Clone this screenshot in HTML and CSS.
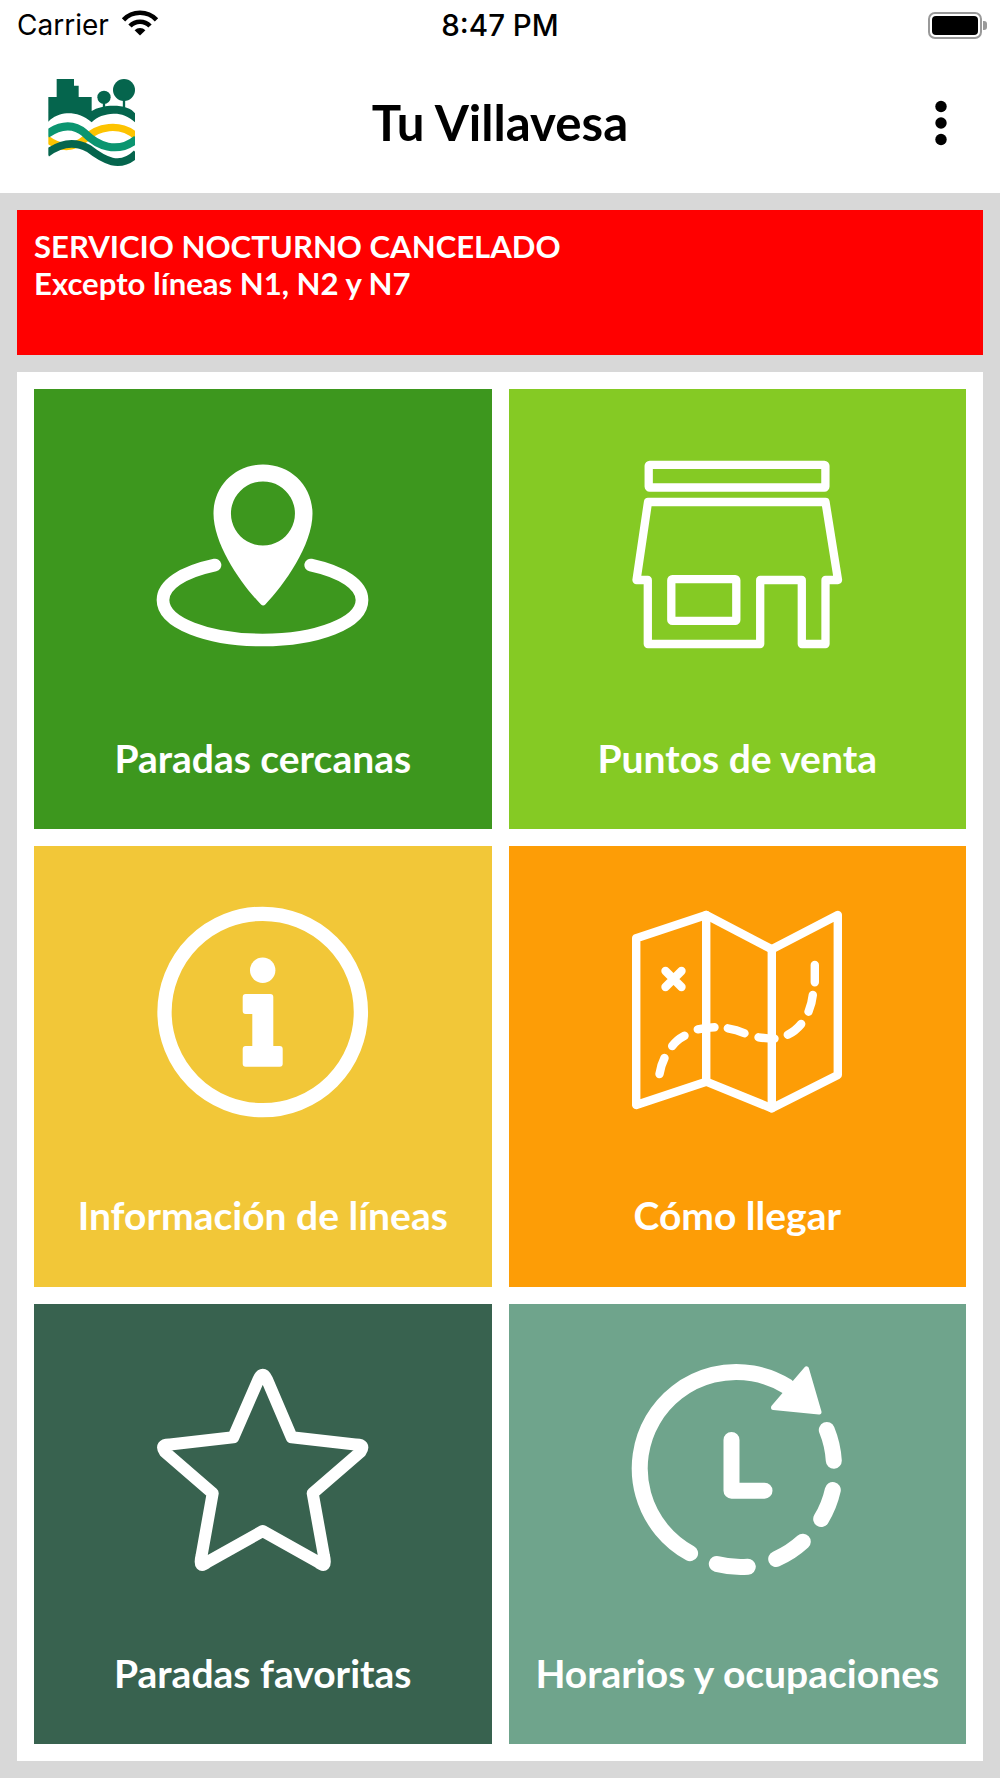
FILE: index.html
```html
<!DOCTYPE html>
<html lang="es">
<head>
<meta charset="utf-8">
<title>Tu Villavesa</title>
<link rel="stylesheet" href="styles.css">
</head>
<body>
<header class="top">
  <div class="status">
    <div class="status-left">
      <span class="carrier">Carrier</span>
      <svg class="wifi" viewBox="0 0 38 26"><path d="M2.5 9.9A22.7 22.7 0 0 1 35.5 9.9" fill="none" stroke="#000" stroke-width="4.6"/><path d="M9 16A13.8 13.8 0 0 1 29 16" fill="none" stroke="#000" stroke-width="4.6"/><path d="M19 25.5L13.6 20.3A7.5 7.5 0 0 1 24.4 20.3Z" fill="#000"/></svg>
    </div>
    <span class="time">8:47 PM</span>
    <div class="status-right">
      <span class="battery"><span class="battery-level"></span></span><span class="battery-nub"></span>
    </div>
  </div>
  <nav class="nav">
    <svg class="logo" viewBox="0 0 360 330">
      <defs><clipPath id="logoclip"><rect x="55" y="0" width="260" height="330"/></clipPath></defs>
      <path d="M55 170V96H80V42H132V62H146V96H185V138C200 128 225 122 250 122C280 122 305 130 315 145V172C295 152 270 145 250 146C225 147 200 155 185 172C160 150 135 144 110 145C90 146 70 155 55 170Z" fill="#05654d"/>
      <circle cx="222" cy="97" r="20" fill="#05654d"/><circle cx="282" cy="75" r="33" fill="#05654d"/>
      <path d="M222 110V128M282 100V128" stroke="#05654d" stroke-width="7"/>
      <g clip-path="url(#logoclip)" fill="none">
        <path d="M50 222C90 252 130 252 165 222C200 185 270 170 320 215" stroke="#fdc300" stroke-width="22"/>
        <path d="M50 208C90 180 130 175 165 205C200 240 260 270 320 222" stroke="#0b9570" stroke-width="24"/>
        <path d="M50 265C90 235 130 225 175 250C220 285 270 315 320 265" stroke="#05654d" stroke-width="23"/>
      </g>
    </svg>
    <h1 class="title">Tu Villavesa</h1>
    <svg class="more" viewBox="0 0 14 46"><circle cx="7" cy="6.5" r="5.7"/><circle cx="7" cy="23" r="5.7"/><circle cx="7" cy="39.5" r="5.7"/></svg>
  </nav>
</header>
<main class="content">
  <section class="alert">
    <p>SERVICIO NOCTURNO CANCELADO</p>
    <p>Excepto líneas N1, N2 y N7</p>
  </section>
  <section class="panel">
    <a class="tile tile-stops">
      <svg class="icon" viewBox="3 -7 260 240">
        <path fill-rule="evenodd" d="M133 24.5C105 24.5 83.5 46 83.5 73.5C83.5 105 112 145 131 164.5C132.300 165.800 134 165.800 135.300 164.500C154 145 182.500 105 182.500 73.500C182.500 46 161 24.500 133 24.500ZM133 41.500A32 32 0 1 1 132.900 41.500Z" fill="#fff"/>
        <path d="M85 125C52 132 33 145 33 160C33 183 78 200 132.500 200C187 200 232 183 232 160C232 145 213 132 180.700 125" fill="none" stroke="#fff" stroke-width="12.700" stroke-linecap="round"/>
      </svg>
      <span class="label">Paradas cercanas</span>
    </a>
    <a class="tile tile-sales">
      <svg class="icon line" viewBox="-2.500 -7 260 240" stroke-width="8.300">
        <rect x="39.200" y="24.800" width="176.700" height="22.700" rx="1"/>
        <path d="M27 140L38.500 62H216L228.500 140H216V204H192.300V140H150.700V204H38.300V140Z"/>
        <rect x="61.800" y="139.200" width="65" height="41.700" rx="1"/>
      </svg>
      <span class="label">Puntos de venta</span>
    </a>
    <a class="tile tile-info">
      <svg class="icon" viewBox="3 0 260 240">
        <circle cx="132.700" cy="122" r="98.200" fill="none" stroke="#fff" stroke-width="14.300"/>
        <circle cx="132.700" cy="80.300" r="12.700" fill="#fff"/>
        <path d="M115.700 107H140.300V159H149.700V173.700H115.700V159H125.300V121H115.700Z" fill="#fff" stroke="#fff" stroke-width="6" stroke-linejoin="round"/>
      </svg>
      <span class="label">Información de líneas</span>
    </a>
    <a class="tile tile-route">
      <svg class="icon line" viewBox="-2.500 0 260 240" stroke-width="8.400">
        <path d="M26.700 48.300L96.700 25L162.300 59.300L228.300 25V185L162.300 218.300L96.700 191.700L26.700 215Z"/>
        <path d="M96.700 25V191.700M162.300 59.300V218.300"/>
        <path d="M56 81L72 97M72 81L56 97"/>
        <path d="M50 184Q51.500 175 55 168M62.700 156Q67 150 75 145.700M88.300 139.300Q97 137.500 105 137.300M118.300 138.300Q127 139.500 135 143.300M149 147.300Q157 148.500 165 148.700M178.300 144.700Q186 141 191.700 134M199 121.700Q202.500 113 203.300 105M205.300 75V92.300"/>
      </svg>
      <span class="label">Cómo llegar</span>
    </a>
    <a class="tile tile-favs">
      <svg class="icon line" viewBox="3 -2 260 240" stroke-width="12">
        <path d="M128.500 29.500Q132.700 20 137 29.500L161.700 87.300L225.400 94.500Q236 94 230.400 102L182.700 143.300L194 206Q197.400 220 188 212L132.700 181L77.500 212Q68 220 71.500 206L82.700 143.300L35 102Q29.400 94 40 94.500L103.300 87.300Z"/>
      </svg>
      <span class="label">Paradas favoritas</span>
    </a>
    <a class="tile tile-times">
      <svg class="icon line" viewBox="-2.500 -2 260 240" stroke-width="16">
        <path d="M80.600 203.200A96.500 96.500 0 1 1 177.700 36.500"/>
        <path d="M197 19L209.500 62L164 57.500Z" fill="#fff" stroke-width="5"/>
        <path d="M217.300 80A96.500 96.500 0 0 1 224.300 110.700M223.300 140A96.500 96.500 0 0 1 211.700 169M193.300 191.700A96.500 96.500 0 0 1 166.700 209M138.300 216.700A96.500 96.500 0 0 1 107.300 214"/>
        <path d="M122 90V140.700H155"/>
      </svg>
      <span class="label">Horarios y ocupaciones</span>
    </a>
  </section>
</main>
</body>
</html>
```
FILE: styles.css
```css
* { box-sizing: border-box; }
html, body { margin: 0; padding: 0; }
body {
  width: 1000px;
  height: 1778px;
  background: #d8d8d8;
  font-family: "Lato", sans-serif;
  display: flex;
  flex-direction: column;
}
.top { background: #fff; height: 193px; flex: none; }
.status {
  height: 50px;
  padding: 0 13px 0 17px;
  display: grid;
  grid-template-columns: 1fr auto 1fr;
  align-items: center;
  font-family: "Inter", sans-serif;
  color: #000;
}
.status-left { display: flex; align-items: center; gap: 12px; }
.carrier { font-weight: 400; font-size: 28px; }
.wifi { width: 38px; height: 26px; margin-top: -4px; }
.time { font-weight: 500; font-size: 29.500px; margin-left: -4px; }
.status-right { display: flex; align-items: center; justify-content: flex-end; }
.battery {
  width: 54px;
  height: 27px;
  border: 2px solid #999;
  border-radius: 7px;
  padding: 2px;
  display: block;
}
.battery-level { display: block; width: 100%; height: 100%; background: #000; border-radius: 4px; }
.battery-nub { width: 4px; height: 9px; background: #999; margin-left: 1px; border-radius: 0 3px 3px 0; }
.nav {
  height: 143px;
  padding: 0 30px;
  display: grid;
  grid-template-columns: 1fr auto 1fr;
  align-items: center;
}
.logo { width: 120px; height: 110px; align-self: start; margin-top: 15px; }
.title {
  margin: 0;
  font-size: 49.200px;
  font-weight: 700;
  color: #000;
}
.more { width: 14px; height: 46px; fill: #000; justify-self: end; margin-right: 22px; margin-top: 3px; }
.content {
  flex: 1;
  padding: 17px;
  display: flex;
  flex-direction: column;
  gap: 17px;
}
.alert {
  height: 145px;
  flex: none;
  background: #f00;
  color: #fff;
  padding: 18px 17px;
  font-weight: 700;
  font-size: 31.100px;
  line-height: 37px;
}
.alert p { margin: 0; }
.panel {
  flex: 1;
  background: #fff;
  padding: 17px;
  display: grid;
  grid-template-columns: 1fr 1fr;
  grid-template-rows: repeat(3, 1fr);
  gap: 17px;
}
.tile {
  display: flex;
  flex-direction: column;
  align-items: center;
  color: #fff;
  min-height: 0;
}
.icon { width: 260px; height: 240px; margin-top: 44px; flex: none; }
.line { fill: none; stroke: #fff; stroke-linecap: round; stroke-linejoin: round; }
.label {
  margin-top: 62px;
  font-size: 39px;
  font-weight: 700;
  line-height: 46px;
  white-space: nowrap;
}
.tile-stops { background: #3d971e; }
.tile-sales { background: #85ca24; }
.tile-info { background: #f2c738; }
.tile-route { background: #fd9d06; }
.tile-favs { background: #38624f; }
.tile-times { background: #6fa48c; }
```
